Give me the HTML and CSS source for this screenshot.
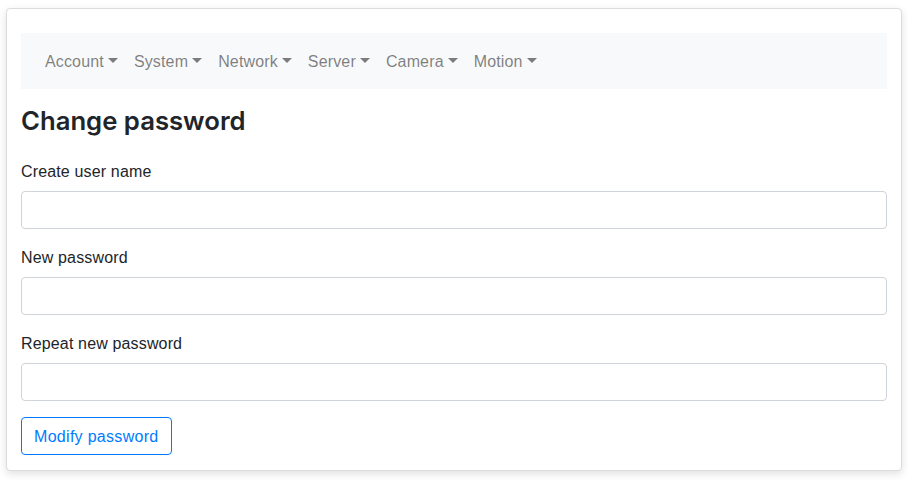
FILE: index.html
```html
<!DOCTYPE html>
<html lang="en">
<head>
<meta charset="utf-8">
<title>Change password</title>
<link rel="stylesheet" href="styles.css">
</head>
<body>
<div class="page">
  <div class="card">
    <nav class="navbar">
      <ul class="nav">
        <li><a class="nav-link dropdown-toggle" href="#">Account</a></li>
        <li><a class="nav-link dropdown-toggle" href="#">System</a></li>
        <li><a class="nav-link dropdown-toggle" href="#">Network</a></li>
        <li><a class="nav-link dropdown-toggle" href="#">Server</a></li>
        <li><a class="nav-link dropdown-toggle" href="#">Camera</a></li>
        <li><a class="nav-link dropdown-toggle" href="#">Motion</a></li>
      </ul>
    </nav>
    <h3 class="title">Change password</h3>
    <form class="form">
      <div class="form-group">
        <label class="label" for="user">Create user name</label>
        <input class="form-control" id="user" type="text">
      </div>
      <div class="form-group">
        <label class="label" for="pw1">New password</label>
        <input class="form-control" id="pw1" type="password">
      </div>
      <div class="form-group">
        <label class="label" for="pw2">Repeat new password</label>
        <input class="form-control" id="pw2" type="password">
      </div>
      <button class="btn" type="button">Modify password</button>
    </form>
  </div>
</div>
</body>
</html>
```
FILE: styles.css
```css
* { box-sizing: border-box; }
html, body {
  margin: 0;
  padding: 0;
  background: #ffffff;
}
body {
  font-family: "Liberation Sans", Arial, sans-serif;
  font-size: 16px;
  line-height: 24px;
  letter-spacing: 0.15px;
  color: #212529;
}
.page {
  padding: 8px 6px 10px 6px;
}
.card {
  width: 896px;
  height: 463px;
  border: 1px solid #dcdcdc;
  border-radius: 4px;
  background: #fff;
  box-shadow: 0 3px 8px rgba(0,0,0,0.12);
  padding: 24px 14px 16px 14px;
}
.navbar {
  background: #f8f9fa;
  padding: 8px 16px;
  height: 56px;
}
.nav {
  list-style: none;
  margin: 0;
  padding: 0;
  display: flex;
}
.nav-link {
  display: block;
  padding: 9px 8px 7px 8px;
  color: rgba(0,0,0,0.5);
  text-decoration: none;
  line-height: 24px;
}
.dropdown-toggle::after {
  content: "";
  display: inline-block;
  margin-left: 4px;
  vertical-align: 4px;
  border-top: 5px solid;
  border-right: 5px solid transparent;
  border-left: 5px solid transparent;
  border-bottom: 0;
}
.title {
  margin: 16px 0 22px 0;
  font-family: Inter, "Liberation Sans", Arial, sans-serif;
  font-size: 25.7px;
  font-weight: 600;
  letter-spacing: 0;
  line-height: 32px;
  color: #212529;
}
.form-group {
  margin-bottom: 16px;
}
.label {
  display: block;
  margin-bottom: 8px;
  padding-top: 1px;
  line-height: 23px;
}
.form-control {
  display: block;
  width: 100%;
  height: 38px;
  padding: 6px 12px;
  font: inherit;
  border: 1px solid #ced4da;
  border-radius: 4px;
  background: #fff;
}
.btn {
  display: inline-block;
  height: 38px;
  padding: 7px 12px 5px 12px;
  font: inherit;
  letter-spacing: 0.3px;
  line-height: 24px;
  color: #007bff;
  background: transparent;
  border: 1px solid #007bff;
  border-radius: 4px;
}
```
